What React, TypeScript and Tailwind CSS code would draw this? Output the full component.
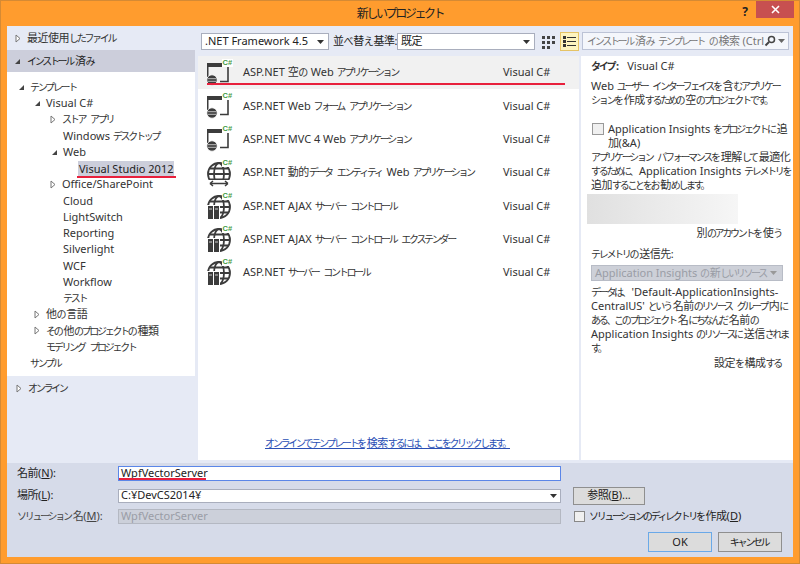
import { ReactNode } from "react";

const FONT = "font-['Noto_Sans','Noto_Sans_CJK_JP',sans-serif]";

// the reference font has narrow kana, so kana and kanji runs get tightened
function T({ children }: { children: string }) {
  const parts = children.split(/([\u3000-\u30ff]+|[\u4e00-\u9fff]+)/).filter(Boolean);
  return (
    <>
      {parts.map((p, i) => {
        if (/^[\u3000-\u30ff]/.test(p)) {
          return (
            <span key={i} className="pr-[2px] text-[10px] tracking-[-2.3px]">
              {p}
            </span>
          );
        }
        if (/^[\u4e00-\u9fff]/.test(p)) {
          return (
            <span key={i} className="tracking-[-0.5px]">
              {p}
            </span>
          );
        }
        return <span key={i}>{p}</span>;
      })}
    </>
  );
}

type TreeRow = { label: string; indent: number; arrow?: "open" | "closed"; selected?: boolean };

const TREE: TreeRow[] = [
  { label: "テンプレート", indent: 30, arrow: "open" },
  { label: "Visual C#", indent: 46, arrow: "open" },
  { label: "ストア アプリ", indent: 62, arrow: "closed" },
  { label: "Windows デスクトップ", indent: 63 },
  { label: "Web", indent: 63, arrow: "open" },
  { label: "Visual Studio 2012", indent: 79, selected: true },
  { label: "Office/SharePoint", indent: 62, arrow: "closed" },
  { label: "Cloud", indent: 63 },
  { label: "LightSwitch", indent: 63 },
  { label: "Reporting", indent: 63 },
  { label: "Silverlight", indent: 63 },
  { label: "WCF", indent: 63 },
  { label: "Workflow", indent: 63 },
  { label: "テスト", indent: 63 },
  { label: "他の言語", indent: 46, arrow: "closed" },
  { label: "その他のプロジェクトの種類", indent: 46, arrow: "closed" },
  { label: "モデリング プロジェクト", indent: 46 },
  { label: "サンプル", indent: 30 },
];

type Template = { name: string; icon: "app" | "data" | "server" };

const TEMPLATES: Template[] = [
  { name: "ASP.NET 空の Web アプリケーション", icon: "app" },
  { name: "ASP.NET Web フォーム アプリケーション", icon: "app" },
  { name: "ASP.NET MVC 4 Web アプリケーション", icon: "app" },
  { name: "ASP.NET 動的データ エンティティ Web アプリケーション", icon: "data" },
  { name: "ASP.NET AJAX サーバー コントロール", icon: "server" },
  { name: "ASP.NET AJAX サーバー コントロール エクステンダー", icon: "server" },
  { name: "ASP.NET サーバー コントロール", icon: "server" },
];

function Arrow({ kind }: { kind: "open" | "closed" }) {
  if (kind === "open") {
    return (
      <svg width="7" height="7" viewBox="0 0 7 7" className="shrink-0">
        <path d="M6 1V6H1Z" fill="#444" />
      </svg>
    );
  }
  return (
    <svg width="6" height="9" viewBox="0 0 6 9" className="shrink-0">
      <path d="M1 1L5 4.5L1 8Z" fill="#fff" stroke="#777" />
    </svg>
  );
}

function CSharp() {
  return (
    <>
      <rect x="17" y="0" width="11" height="8" fill="#fff" />
      <text x="17.5" y="6" fontSize="7.5" fontWeight="700" fill="#3f9a3f" fontFamily="Liberation Sans, sans-serif">
        C#
      </text>
    </>
  );
}

function Globe() {
  return (
    <g fill="none" stroke="#3c3c3c" strokeWidth="1.8">
      <circle cx="14" cy="15" r="11" />
      <ellipse cx="14" cy="15" rx="5" ry="11" />
      <path d="M3 15H25M5 9.5H23M5 20.5H23" />
    </g>
  );
}

function TemplateIcon({ kind }: { kind: Template["icon"] }) {
  return (
    <svg width="28" height="28" viewBox="0 0 28 28" className="shrink-0">
      {kind === "app" && (
        <>
          <path d="M2 4H18V8H3.5V18H2Z" fill="#3c3c3c" />
          <path d="M23 8V22.5H15" fill="none" stroke="#3c3c3c" strokeWidth="1.6" />
          <circle cx="7" cy="21" r="5.2" fill="#3c3c3c" stroke="#fff" strokeWidth="0.8" />
          <path d="M3 19.7H11M3 22.3H11" stroke="#ddd" strokeWidth="0.8" />
        </>
      )}
      {kind === "data" && (
        <>
          <Globe />
          <rect x="3" y="21" width="22" height="7" fill="#fff" />
          <path d="M5 24.5H23M5 24.5L8 22M5 24.5L8 27M23 24.5L20 22M23 24.5L20 27" fill="none" stroke="#3c3c3c" strokeWidth="1.5" />
        </>
      )}
      {kind === "server" && (
        <>
          <Globe />
          <rect x="2" y="13" width="13" height="15" fill="#fff" />
          <rect x="3" y="14" width="5" height="13" fill="#3c3c3c" />
          <rect x="9" y="14" width="5" height="13" fill="#3c3c3c" />
          <path d="M4 17H7M10 17H13" stroke="#ccc" />
        </>
      )}
      <CSharp />
    </svg>
  );
}

function Caret({ color = "#333" }: { color?: string }) {
  return (
    <svg width="7" height="4" viewBox="0 0 7 4" className="shrink-0">
      <path d="M0 0H7L3.5 4Z" fill={color} />
    </svg>
  );
}

function Mnemonic({ text, letter, tail = "" }: { text: string; letter: string; tail?: string }) {
  return (
    <>
      <T>{text}</T>(<span className="underline">{letter}</span>){tail}
    </>
  );
}

function FormLabel({ children, muted }: { children: ReactNode; muted?: boolean }) {
  return <div className={`w-[111px] shrink-0 whitespace-nowrap pl-[10px] ${muted ? "text-[#444]" : "text-[#222]"}`}>{children}</div>;
}

export default function App() {
  return (
    <div className={`${FONT} flex h-[564px] w-[800px] flex-col overflow-hidden border border-[#d58a34] bg-[#ff9c2e] text-[11px] text-[#333]`}>
      <div className="relative flex h-[25px] shrink-0 items-center justify-center text-[12px] tracking-[-2.4px] text-[#222]">
        新しいプロジェクト
        <span className="absolute right-[51px] top-[2px] text-[12px] font-bold tracking-normal text-[#222]">?</span>
        <div className="absolute right-[5px] top-0 flex h-[17px] w-[38px] items-center justify-center bg-[#c75050]">
          <svg width="9" height="9" viewBox="0 0 9 9">
            <path d="M1 1L8 8M8 1L1 8" stroke="#fff" strokeWidth="1.6" />
          </svg>
        </div>
      </div>

      <div className="mx-[6px] flex h-[531px] w-[786px] flex-col whitespace-nowrap bg-[#e6eaf5]">
        <div className="flex h-[434px] shrink-0">
          {/* left nav */}
          <div className="flex w-[188px] shrink-0 flex-col">
            <div className="flex h-[24px] items-center gap-[6px] pl-[8px] pt-[1px] text-[#333]">
              <Arrow kind="closed" />
              <span><T>最近使用したファイル</T></span>
            </div>
            <div className="flex h-[22px] items-center gap-[6px] bg-[#ccceDb] pl-[7px] text-[#222]">
              <Arrow kind="open" />
              <span><T>インストール済み</T></span>
            </div>
            <div className="h-[304px] bg-white pt-[7px]">
              {TREE.map((row) => (
                <div key={row.label} className="relative flex h-[16.25px] items-center" style={{ paddingLeft: row.indent - 7 }}>
                  {row.arrow && (
                    <span className="absolute flex w-[8px] justify-center" style={{ left: row.indent - 20 }}>
                      <Arrow kind={row.arrow} />
                    </span>
                  )}
                  {row.selected ? (
                    <span className="relative -ml-[1px] bg-[#ccceDb] px-[1px] leading-[15px] text-[#222]">
                      {row.label}
                      <span className="absolute -left-[1px] -right-[2px] top-[15px] h-[2px] bg-[#e8203c]" />
                    </span>
                  ) : (
                    <span><T>{row.label}</T></span>
                  )}
                </div>
              ))}
            </div>
            <div className="flex h-[24px] items-center gap-[6px] pl-[9px]">
              <Arrow kind="closed" />
              <span><T>オンライン</T></span>
            </div>
          </div>

          {/* middle */}
          <div className="ml-[3px] flex w-[381px] shrink-0 flex-col">
            <div className="flex h-[30px] shrink-0 items-start pt-[7px]">
              <div className="ml-[3px] flex h-[17px] w-[128px] items-center justify-between border border-[#a9aebd] bg-white pl-[3px] pr-[4px] text-[#222]">
                .NET Framework 4.5
                <Caret />
              </div>
              <span className="ml-[4px] w-[64px] text-[#222]"><T>並べ替え基準</T>:</span>
              <div className="flex h-[17px] w-[138px] items-center justify-between border border-[#a9aebd] bg-white pl-[3px] pr-[4px] text-[#222]">
                <span><T>既定</T></span>
                <Caret />
              </div>
              <svg width="14" height="14" viewBox="0 0 14 14" className="ml-[6px] mt-[2px]">
                <path d="M1 1h3v3H1zM6 1h3v3H6zM11 1h3v3h-3zM1 6h3v3H1zM6 6h3v3H6zM11 6h3v3h-3zM1 11h3v3H1zM6 11h3v3H6z" fill="#444" />
              </svg>
              <div className="ml-[5px] -mt-[1px] flex h-[19px] w-[19px] items-center justify-center border border-[#e5c365] bg-[#fdf4bf]">
                <svg width="13" height="11" viewBox="0 0 13 11">
                  <path d="M0 0h3v3H0zM0 4h3v3H0zM0 8h3v3H0zM4 1h9v1H4zM4 5h9v1H4zM4 9h9v1H4z" fill="#333" />
                </svg>
              </div>
            </div>
            <div className="relative flex h-[404px] flex-col bg-white">
              {TEMPLATES.map((t, i) => (
                <div key={t.name} className={`relative flex h-[33.3px] items-center pl-[7px] ${i === 0 ? "bg-[#f1f1f1]" : ""}`}>
                  <TemplateIcon kind={t.icon} />
                  <span className="ml-[10px] text-[#333]"><T>{t.name}</T></span>
                  <span className="absolute left-[305px]">Visual C#</span>
                  {i === 0 && <span className="absolute left-[9px] top-[27px] h-[2px] w-[358px] bg-[#e8203c]" />}
                </div>
              ))}
              <div className="mt-auto mb-[9px] text-center text-[#2a4fb5] underline"><T>オンラインでテンプレートを検索するには、ここをクリックします。</T></div>
            </div>
          </div>

          {/* right */}
          <div className="ml-[2px] flex w-[212px] shrink-0 flex-col">
            <div className="h-[30px] shrink-0 pl-[1px] pr-[4px] pt-[6px]">
              <div className="flex h-[18px] items-center justify-between border border-[#bcc3d6] bg-[#f4f6fb] pl-[4px] pr-[4px] text-[#777]">
                <span><T>インストール済み テンプレート の検索 (Ctrl</T></span>
                <span className="flex items-center gap-[2px]">
                  <svg width="12" height="12" viewBox="0 0 12 12">
                    <circle cx="7.5" cy="4.5" r="3" fill="none" stroke="#444" strokeWidth="1.5" />
                    <path d="M5 7L1.5 10.5" stroke="#444" strokeWidth="2" />
                  </svg>
                  <Caret color="#666" />
                </span>
              </div>
            </div>
            <div className="h-[404px] bg-white pl-[10px] pr-[10px] leading-[14px]">
              <div className="mt-[3px] flex h-[14px] items-center gap-[8px]">
                <b className="font-bold"><T>タイプ</T>:</b>
                <span>Visual C#</span>
              </div>
              <p className="mt-[6px]">
                <T>Web ユーザー インターフェイスを含むアプリケー</T>
                <br />
                <T>ションを作成するための空のプロジェクトです。</T>
              </p>
              <div className="mt-[15px] flex">
                <span className="ml-[1px] mr-[4px] mt-[1px] h-[12px] w-[12px] shrink-0 border border-[#999] bg-[#f0f0f0]" />
                <span>
                  <T>Application Insights をプロジェクトに追</T>
                  <br />
                  <T>加</T>(&amp;A)
                </span>
              </div>
              <p>
                <T>アプリケーション パフォーマンスを理解して最適化</T>
                <br />
                <T>するために、Application Insights テレメトリを</T>
                <br />
                <T>追加することをお勧めします。</T>
              </p>
              <div className="-ml-[4px] mt-[2px] h-[30px] w-[151px] bg-gradient-to-r from-[#e0e0e0] to-[#f6f6f6]" />
              <div className="mt-[2px] text-right"><T>別のアカウントを使う</T></div>
              <div className="mt-[7px]"><T>テレメトリの送信先</T>:</div>
              <div className="mt-[4px] flex h-[16px] items-center justify-between border border-[#b8bcc6] bg-[#cdd0d8] pl-[3px] pr-[5px] text-[#9a9da6]">
                <span><T>Application Insights の新しいリソース</T></span>
                <Caret color="#999" />
              </div>
              <p className="mt-[4px] leading-[13px]">
                <T>データは、'Default-ApplicationInsights-</T>
                <br />
                <T>CentralUS' という名前のリソース グループ内に</T>
                <br />
                <T>ある、このプロジェクト名にちなんだ名前の</T>
                <br />
                <T>Application Insights のリソースに送信されま</T>
                <br />
                <T>す。</T>
              </p>
              <div className="mt-[1px] text-right"><T>設定を構成する</T></div>
            </div>
          </div>
        </div>

        {/* bottom form */}
        <div className="mt-[3px] flex-1 bg-[#d6dbe9] pt-[3px] text-[#222]">
          <div className="flex h-[15px] items-center">
            <FormLabel>
              <Mnemonic text="名前" letter="N" tail=":" />
            </FormLabel>
            <div className="relative flex h-[15px] w-[443px] items-center border border-[#5b86e8] bg-white pl-[2px]">
              WpfVectorServer
              <span className="absolute left-0 top-[11px] h-[2px] w-[87px] bg-[#e8203c]" />
            </div>
          </div>
          <div className="mt-[7px] flex h-[15px] items-center">
            <FormLabel>
              <Mnemonic text="場所" letter="L" tail=":" />
            </FormLabel>
            <div className="flex h-[14px] w-[443px] items-center justify-between border border-[#a9aebd] bg-white pl-[2px] pr-[3px]">
              C:¥DevCS2014¥
              <Caret />
            </div>
            <div className="ml-[12px] flex h-[18px] w-[72px] items-center justify-center border border-[#8f8f8f] bg-[#dcdcdc]">
              <span><Mnemonic text="参照" letter="B" tail="..." /></span>
            </div>
          </div>
          <div className="mt-[6px] flex h-[15px] items-center">
            <FormLabel muted>
              <Mnemonic text="ソリューション名" letter="M" tail=":" />
            </FormLabel>
            <div className="flex h-[15px] w-[443px] items-center border border-[#b4b8c2] bg-[#ccd0da] pl-[2px] text-[#9a9da6]">WpfVectorServer</div>
            <span className="ml-[13px] mr-[4px] h-[11px] w-[11px] border border-[#888] bg-[#f0f0f0]" />
            <span>
              <Mnemonic text="ソリューションのディレクトリを作成" letter="D" />
            </span>
          </div>
          <div className="mt-[8px] flex justify-end gap-[6px] pr-[11px]">
            <div className="flex h-[20px] w-[64px] items-center justify-center border border-[#6aa9e8] bg-[#dcdcdc]">OK</div>
            <div className="flex h-[20px] w-[64px] items-center justify-center border border-[#8f8f8f] bg-[#dcdcdc]"><span><T>キャンセル</T></span></div>
          </div>
        </div>
      </div>
    </div>
  );
}
